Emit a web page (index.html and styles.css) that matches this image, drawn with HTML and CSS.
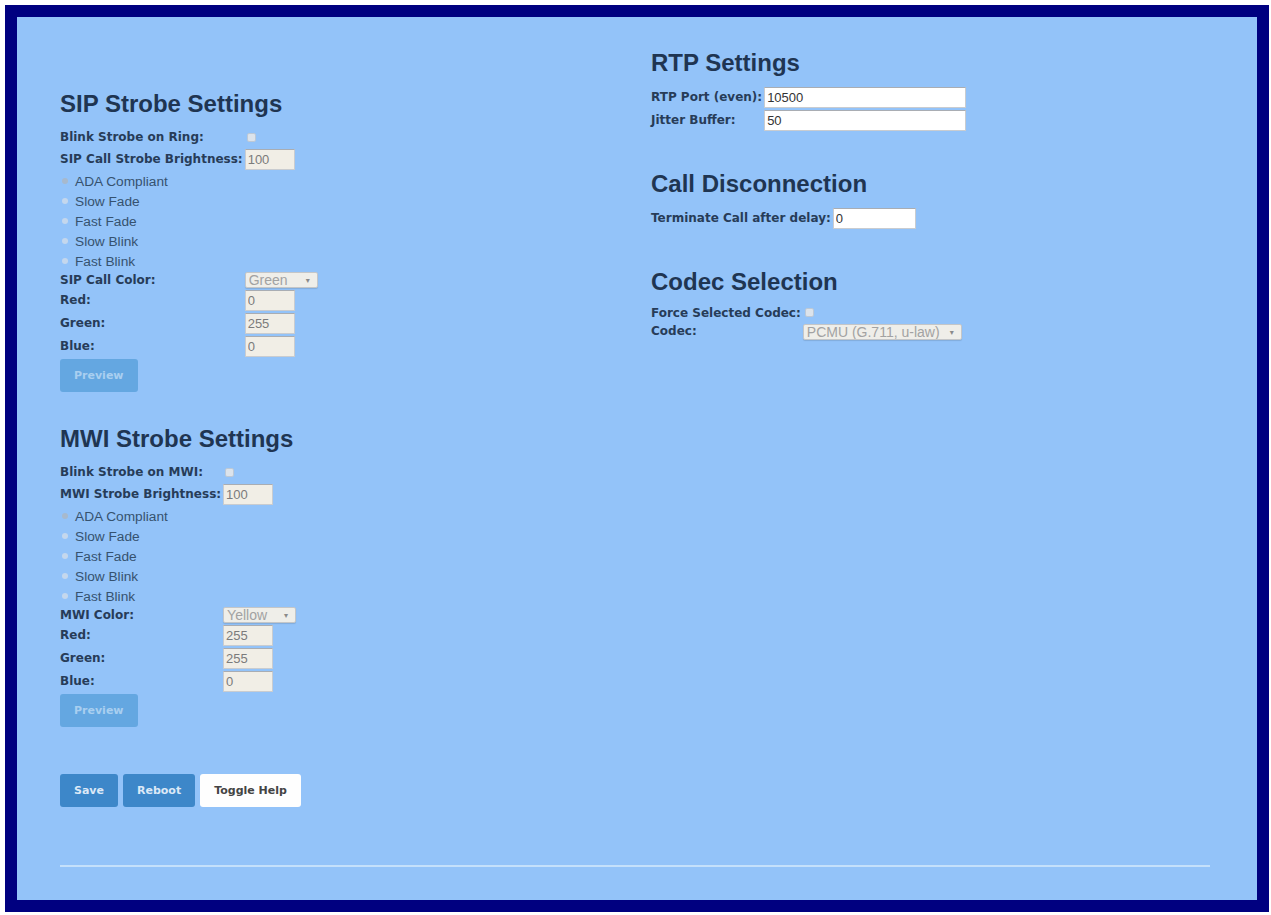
FILE: index.html
```html
<!DOCTYPE html>
<html lang="en">
  <head>
    <meta charset="UTF-8" />
    <meta name="viewport" content="width=device-width, initial-scale=1.0" />
    <title>Strobe Settings</title>
    <link rel="stylesheet" href="styles.css">
  </head>
  <body>
    <div class="frame">
      <div class="columns">
        <div class="col-left">
          <section class="section">
            <h2>SIP Strobe Settings</h2>
            <div class="form-grid">
              <label class="field-label" for="sip-blink">Blink Strobe on Ring:</label>
              <input type="checkbox" id="sip-blink" class="check" />

              <label class="field-label" for="sip-brightness">SIP Call Strobe Brightness:</label>
              <input type="text" id="sip-brightness" class="text-input muted" value="100" />

              <label class="radio-row"><input type="radio" name="sip-mode" class="radio" checked /> ADA Compliant</label>
              <label class="radio-row"><input type="radio" name="sip-mode" class="radio" /> Slow Fade</label>
              <label class="radio-row"><input type="radio" name="sip-mode" class="radio" /> Fast Fade</label>
              <label class="radio-row"><input type="radio" name="sip-mode" class="radio" /> Slow Blink</label>
              <label class="radio-row"><input type="radio" name="sip-mode" class="radio" /> Fast Blink</label>

              <label class="field-label" for="sip-color">SIP Call Color:</label>
              <div class="select-box">
                <select id="sip-color">
                  <option>Green</option>
                </select>
                <span class="caret">&#9662;</span>
              </div>

              <label class="field-label" for="sip-red">Red:</label>
              <input type="text" id="sip-red" class="text-input muted" value="0" />

              <label class="field-label" for="sip-green">Green:</label>
              <input type="text" id="sip-green" class="text-input muted" value="255" />

              <label class="field-label" for="sip-blue">Blue:</label>
              <input type="text" id="sip-blue" class="text-input muted" value="0" />
            </div>
            <button class="btn btn-preview" disabled>Preview</button>
          </section>

          <section class="section">
            <h2>MWI Strobe Settings</h2>
            <div class="form-grid">
              <label class="field-label" for="mwi-blink">Blink Strobe on MWI:</label>
              <input type="checkbox" id="mwi-blink" class="check" />

              <label class="field-label" for="mwi-brightness">MWI Strobe Brightness:</label>
              <input type="text" id="mwi-brightness" class="text-input muted" value="100" />

              <label class="radio-row"><input type="radio" name="mwi-mode" class="radio" checked /> ADA Compliant</label>
              <label class="radio-row"><input type="radio" name="mwi-mode" class="radio" /> Slow Fade</label>
              <label class="radio-row"><input type="radio" name="mwi-mode" class="radio" /> Fast Fade</label>
              <label class="radio-row"><input type="radio" name="mwi-mode" class="radio" /> Slow Blink</label>
              <label class="radio-row"><input type="radio" name="mwi-mode" class="radio" /> Fast Blink</label>

              <label class="field-label" for="mwi-color">MWI Color:</label>
              <div class="select-box">
                <select id="mwi-color">
                  <option>Yellow</option>
                </select>
                <span class="caret">&#9662;</span>
              </div>

              <label class="field-label" for="mwi-red">Red:</label>
              <input type="text" id="mwi-red" class="text-input muted" value="255" />

              <label class="field-label" for="mwi-green">Green:</label>
              <input type="text" id="mwi-green" class="text-input muted" value="255" />

              <label class="field-label" for="mwi-blue">Blue:</label>
              <input type="text" id="mwi-blue" class="text-input muted" value="0" />
            </div>
            <button class="btn btn-preview" disabled>Preview</button>
          </section>
        </div>

        <div class="col-right">
          <section class="section">
            <h2>RTP Settings</h2>
            <div class="form-grid">
              <label class="field-label" for="rtp-port">RTP Port (even):</label>
              <input type="text" id="rtp-port" class="text-input wide" value="10500" />

              <label class="field-label" for="jitter">Jitter Buffer:</label>
              <input type="text" id="jitter" class="text-input wide" value="50" />
            </div>
          </section>

          <section class="section">
            <h2>Call Disconnection</h2>
            <div class="form-grid">
              <label class="field-label" for="terminate">Terminate Call after delay:</label>
              <input type="text" id="terminate" class="text-input medium" value="0" />
            </div>
          </section>

          <section class="section">
            <h2>Codec Selection</h2>
            <div class="form-grid">
              <label class="field-label" for="force-codec">Force Selected Codec:</label>
              <input type="checkbox" id="force-codec" class="check tight" />

              <label class="field-label" for="codec">Codec:</label>
              <div class="select-box codec">
                <select id="codec">
                  <option>PCMU (G.711, u-law)</option>
                </select>
                <span class="caret">&#9662;</span>
              </div>
            </div>
          </section>
        </div>
      </div>

      <div class="actions">
        <button class="btn btn-primary">Save</button>
        <button class="btn btn-primary">Reboot</button>
        <button class="btn btn-light">Toggle Help</button>
      </div>

      <hr class="divider" />
    </div>
  </body>
</html>
```

FILE: styles.css
```css
:root {
  --frame-color: #000080;
  --page-color: #93c3f9;
  --heading-color: #1f3552;
  --label-color: #273c58;
  --radio-text: #36526f;
  --primary-color: #3d87c9;
  --preview-color: #64a7e1;
}
body {
  margin: 0;
  padding: 5px;
  background-color: #ffffff;
  font-family: "DejaVu Sans", sans-serif;
}
.frame {
  box-sizing: border-box;
  width: 1264px;
  height: 907px;
  border: 12px solid var(--frame-color);
  background-color: var(--page-color);
  padding: 0 47px 0 43px;
}
.columns {
  display: flex;
  align-items: flex-start;
}
.col-left {
  flex: 0 0 591px;
  padding-top: 73px;
}
.col-right {
  flex: 1;
  padding-top: 32px;
}
.section {
  margin-bottom: 33px;
}
.col-left .section:last-child {
  margin-bottom: 0;
}
.col-right .section {
  margin-bottom: 38px;
}
h2 {
  margin: 0 0 9px;
  font-family: "Liberation Sans", Arial, sans-serif;
  font-size: 24px;
  line-height: 28px;
  font-weight: 700;
  color: var(--heading-color);
}
.form-grid {
  display: grid;
  grid-template-columns: max-content max-content;
  column-gap: 2px;
  align-items: center;
  justify-items: start;
}
.field-label {
  font-family: "DejaVu Sans", sans-serif;
  font-size: 12px;
  line-height: 15px;
  font-weight: 700;
  color: var(--label-color);
}
.check {
  appearance: none;
  box-sizing: border-box;
  width: 9px;
  height: 9px;
  margin: 6px 0 6px 2px;
  background-color: #dce3eb;
  border: 1px solid #bcc8d6;
  border-radius: 2px;
}
.check.tight {
  margin: 3px 0 4px 2px;
}
.text-input {
  box-sizing: border-box;
  width: 50px;
  height: 21px;
  margin: 1px 0;
  padding: 0 2px;
  font-family: "Liberation Sans", Arial, sans-serif;
  font-size: 13px;
  color: #333;
  background-color: #ffffff;
  border: 1px solid #c9ccd0;
  border-top-color: #a9adb3;
  outline: none;
}
.text-input.muted {
  background-color: #f1eee6;
  color: #7b7b7b;
}
.text-input.wide {
  width: 202px;
}
.text-input.medium {
  width: 83px;
}
.radio-row {
  grid-column: 1 / -1;
  display: flex;
  align-items: center;
  gap: 7px;
  height: 20px;
  font-family: "Liberation Sans", Arial, sans-serif;
  font-size: 13.7px;
  color: var(--radio-text);
}
.radio {
  appearance: none;
  width: 6px;
  height: 6px;
  margin: 0 0 0 2px;
  border-radius: 50%;
  background-color: #c4d7ed;
}
.radio:checked {
  background-color: #a7b9cd;
}
.select-box {
  box-sizing: border-box;
  display: inline-flex;
  align-items: center;
  width: 73px;
  height: 16px;
  margin: 1px 0;
  background-color: #efeee9;
  border: 1px solid #c4c6c8;
  border-radius: 2px;
  box-shadow: 0 1px 1px rgba(0, 0, 0, 0.12);
}
.select-box.codec {
  width: 159px;
  margin: 3px 0 1px;
}
.select-box select {
  flex: 1;
  min-width: 0;
  appearance: none;
  border: none;
  background: transparent;
  padding: 0 0 0 3px;
  height: 14px;
  font-family: "Liberation Sans", Arial, sans-serif;
  font-size: 14px;
  line-height: 14px;
  color: #a2a2a2;
  outline: none;
}
.caret {
  font-size: 8px;
  color: #8a8a8a;
  padding: 0 7px 0 2px;
}
.btn {
  height: 33px;
  padding: 0 14px;
  border: none;
  border-radius: 3px;
  font-family: "DejaVu Sans", sans-serif;
  font-size: 11px;
  font-weight: 700;
  cursor: pointer;
}
.btn-preview {
  display: block;
  margin-top: 1px;
  background-color: var(--preview-color);
  color: #a9cff0;
  cursor: not-allowed;
}
.btn-primary {
  background-color: var(--primary-color);
  color: #dce9f7;
}
.btn-light {
  background-color: #fefefe;
  color: #444444;
}
.actions {
  display: flex;
  gap: 5px;
  margin-top: 47px;
}
.divider {
  margin: 58px 0 0;
  height: 2px;
  border: none;
  background-color: #c4e0fb;
}
```
